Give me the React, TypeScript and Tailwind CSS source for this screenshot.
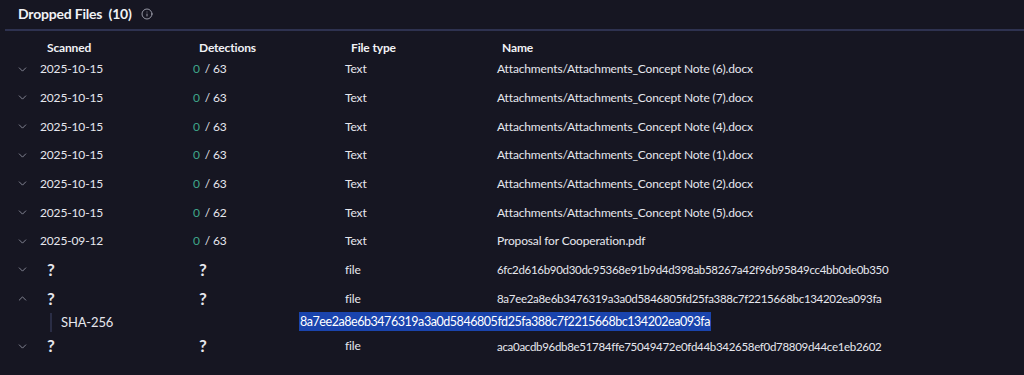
import React from 'react';
import { ChevronDown, ChevronUp, Info } from 'lucide-react';

interface DroppedFile {
  scanned?: string;
  detections?: number;
  total?: number;
  type: string;
  name: string;
  open?: boolean;
}

const FILES: DroppedFile[] = [
  { scanned: '2025-10-15', detections: 0, total: 63, type: 'Text', name: 'Attachments/Attachments_Concept Note (6).docx' },
  { scanned: '2025-10-15', detections: 0, total: 63, type: 'Text', name: 'Attachments/Attachments_Concept Note (7).docx' },
  { scanned: '2025-10-15', detections: 0, total: 63, type: 'Text', name: 'Attachments/Attachments_Concept Note (4).docx' },
  { scanned: '2025-10-15', detections: 0, total: 63, type: 'Text', name: 'Attachments/Attachments_Concept Note (1).docx' },
  { scanned: '2025-10-15', detections: 0, total: 63, type: 'Text', name: 'Attachments/Attachments_Concept Note (2).docx' },
  { scanned: '2025-10-15', detections: 0, total: 62, type: 'Text', name: 'Attachments/Attachments_Concept Note (5).docx' },
  { scanned: '2025-09-12', detections: 0, total: 63, type: 'Text', name: 'Proposal for Cooperation.pdf' },
  { type: 'file', name: '6fc2d616b90d30dc95368e91b9d4d398ab58267a42f96b95849cc4bb0de0b350' },
  { type: 'file', name: '8a7ee2a8e6b3476319a3a0d5846805fd25fa388c7f2215668bc134202ea093fa', open: true },
  { type: 'file', name: 'aca0acdb96db8e51784ffe75049472e0fd44b342658ef0d78809d44ce1eb2602' },
];

const grid = 'grid grid-cols-[40px_153px_152px_152px_1fr] items-center';
// hashes are set tighter, the way the narrow UI font renders them
const hash = 'text-[11.5px] tracking-[-0.3px]';

export default function App() {
  return (
    <div className="min-h-[375px] w-[1024px] bg-[#161622] text-[#e6e7ee] text-[12px] tracking-[-0.15px] font-['Lato',sans-serif] overflow-hidden">
      {/* Header */}
      <div className="flex items-center h-[29px] pb-[2px] pl-[18px] gap-[9px]">
        <span className="text-[14px] font-bold text-[#f1f2f6] tracking-[-0.2px]">
          Dropped Files <span className="ml-[3px]">(10)</span>
        </span>
        <Info size={12} strokeWidth={1.6} className="text-[#b7b9c6]" />
      </div>
      <div className="ml-[5px] h-[2px] bg-[#2e3250]" />

      {/* Column headings */}
      <div className={`${grid} h-[24px] pt-[8px] font-bold text-[#f1f2f6]`}>
        <span />
        <span className="pl-[7px]">Scanned</span>
        <span className="pl-[6px]">Detections</span>
        <span className="pl-[6px]">File type</span>
        <span className="pl-[5px]">Name</span>
      </div>

      {FILES.map((f, i) => (
        <div key={i}>
          <div className={`${grid} h-[28.67px]`}>
            <span className="flex justify-center pl-[4px] text-[#9a9cab]">
              {f.open ? <ChevronUp size={13} strokeWidth={1.5} /> : <ChevronDown size={13} strokeWidth={1.5} />}
            </span>
            {f.scanned ? (
              <span>{f.scanned}</span>
            ) : (
              <span className="pl-[7px] text-[17px] font-bold">?</span>
            )}
            {f.total !== undefined ? (
              <span>
                <span className="text-[#3fa68a]">{f.detections}</span>
                <span className="ml-[5px]">/ {f.total}</span>
              </span>
            ) : (
              <span className="pl-[6px] text-[17px] font-bold">?</span>
            )}
            <span>{f.type}</span>
            <span className={f.scanned ? '' : hash}>{f.name}</span>
          </div>
          {f.open && (
            <div className="grid grid-cols-[50px_249px_1fr] items-center h-[19px] text-[13px]">
              <span />
              <span className="flex items-center h-full">
                <span className="w-[2px] h-full bg-[#2a2d45]" />
                <span className="ml-[9px]">SHA-256</span>
              </span>
              <span className="text-[12.5px] tracking-[-0.45px]">
                <span className="bg-[#1a44ad] text-white px-[1px] py-[2px]">{f.name}</span>
              </span>
            </div>
          )}
        </div>
      ))}
    </div>
  );
}
